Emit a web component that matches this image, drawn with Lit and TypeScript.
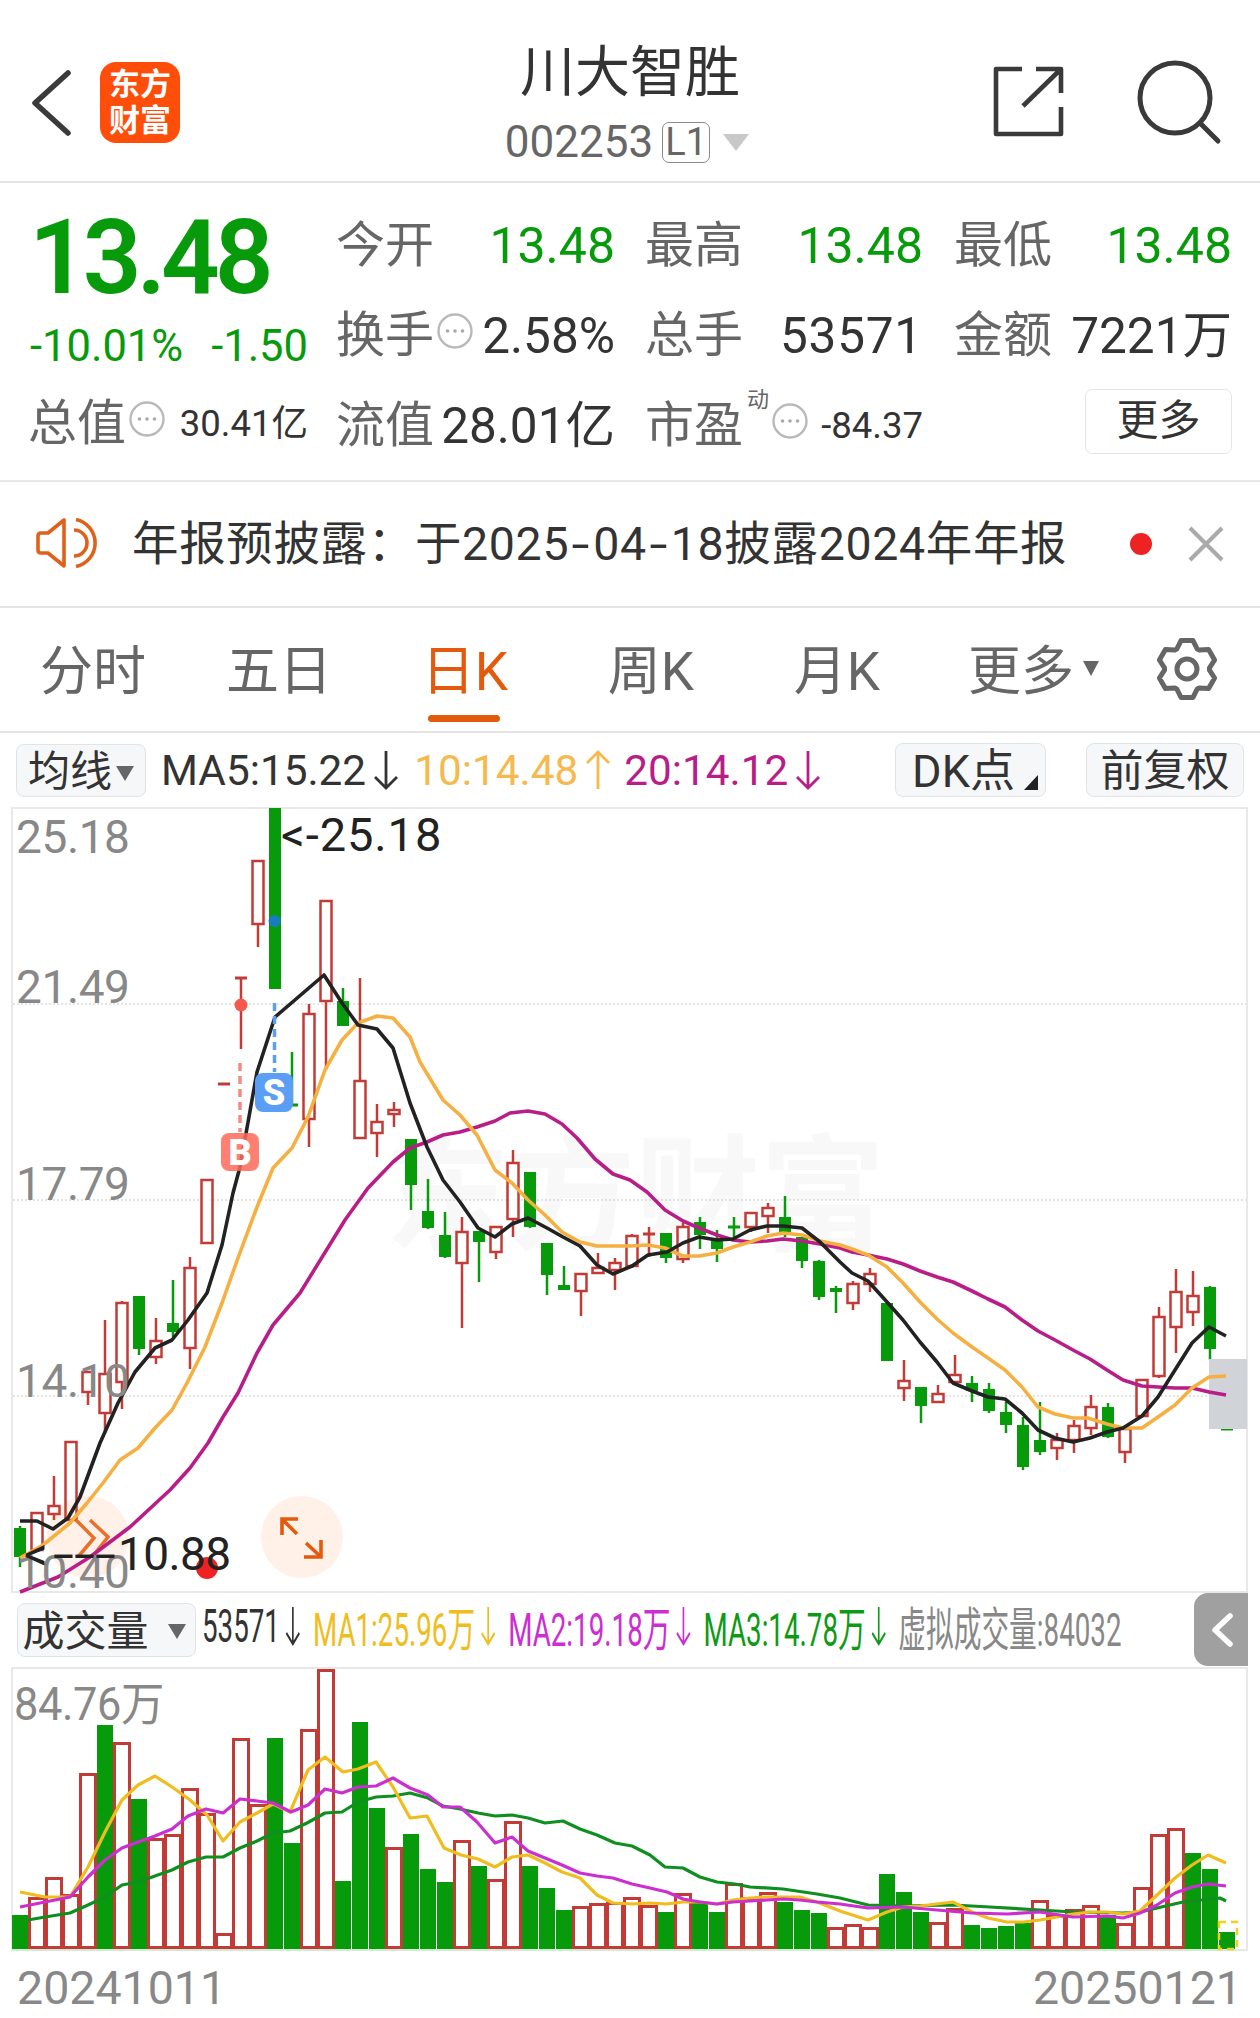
import { LitElement, html, css, svg, unsafeCSS } from "lit";
import { customElement } from "lit/decorators.js";

const RED = "#c23b36";
const GREEN = "#079a0b";
const svgColor = (c: string) => unsafeCSS(c);

// [wickTop, bodyTop, bodyBottom, wickBottom, isGreen]
const K: [number, number, number, number, number][] = [
  [1526,1528,1557,1567,1],[1513,1513,1550,1550,0],[1476,1506,1514,1520,0],[1442,1442,1520,1520,0],
  [1372,1372,1392,1405,0],[1320,1374,1413,1433,0],[1301,1303,1382,1409,0],[1296,1296,1349,1355,1],
  [1318,1341,1357,1364,0],[1280,1323,1332,1337,1],[1257,1268,1348,1369,0],[1180,1180,1243,1243,0],
  [1084,1084,1084,1084,0],[978,978,978,1049,0],[861,861,924,947,0],[808,808,989,989,1],
  [1052,1105,1105,1105,1],[1004,1014,1119,1147,0],[901,901,1001,1070,0],[988,1001,1026,1026,1],
  [978,1081,1138,1138,0],[1104,1122,1133,1157,0],[1102,1110,1114,1127,0],[1139,1139,1185,1210,1],
  [1179,1211,1228,1229,1],[1212,1235,1257,1258,1],[1217,1232,1263,1328,0],[1231,1231,1242,1282,1],
  [1227,1227,1252,1259,0],[1150,1163,1219,1237,0],[1172,1172,1227,1228,1],[1243,1243,1275,1295,1],
  [1266,1285,1290,1290,1],[1274,1274,1291,1316,0],[1253,1268,1273,1273,0],[1258,1263,1270,1290,0],
  [1234,1236,1266,1268,0],[1227,1233,1235,1257,0],[1233,1233,1258,1263,1],[1223,1227,1259,1263,0],
  [1217,1222,1235,1249,1],[1230,1238,1249,1262,1],[1217,1227,1227,1240,1],[1213,1213,1227,1232,0],
  [1203,1208,1216,1233,0],[1196,1217,1232,1237,1],[1237,1237,1261,1268,1],[1260,1261,1297,1300,1],
  [1286,1288,1292,1313,1],[1281,1284,1303,1310,0],[1268,1274,1284,1292,0],[1303,1303,1361,1361,1],
  [1360,1381,1388,1401,0],[1387,1387,1406,1423,1],[1385,1394,1402,1403,0],[1355,1375,1382,1383,0],
  [1376,1383,1391,1402,1],[1383,1389,1411,1413,1],[1402,1412,1425,1433,1],[1417,1425,1467,1470,1],
  [1402,1440,1452,1455,1],[1433,1440,1448,1460,0],[1420,1426,1440,1453,0],[1395,1407,1428,1435,0],
  [1403,1407,1437,1438,1],[1429,1429,1452,1463,0],[1380,1380,1416,1416,0],[1307,1317,1376,1378,0],
  [1269,1292,1327,1353,0],[1271,1296,1312,1326,0],[1286,1287,1349,1360,1],[1429,1429,1429,1429,1],
];

// [top, isGreen]
const V: [number, number][] = [
  [1915,1],[1897,0],[1877,0],[1894,0],[1773,0],[1725,1],[1742,0],[1799,1],[1838,0],[1834,0],[1788,0],[1813,0],
  [1933,0],[1738,0],[1804,0],[1738,1],[1843,1],[1729,0],[1669,0],[1881,1],[1722,1],[1808,1],[1847,0],[1834,1],
  [1869,1],[1882,1],[1840,0],[1866,1],[1879,0],[1821,0],[1866,1],[1888,1],[1910,1],[1906,0],[1903,0],[1902,0],
  [1897,0],[1905,0],[1912,1],[1893,0],[1903,1],[1912,1],[1883,0],[1897,0],[1892,0],[1902,1],[1910,1],[1913,1],
  [1927,0],[1924,0],[1927,0],[1874,1],[1892,1],[1912,1],[1922,0],[1908,0],[1925,1],[1928,1],[1926,1],[1923,1],
  [1900,0],[1915,0],[1909,0],[1905,0],[1915,1],[1923,0],[1887,0],[1834,0],[1828,0],[1853,1],[1869,1],[1932,1],
];

const MA5 = "20,1521 37,1521 53,1529 68,1518 80,1497 100,1443 118,1403 135,1372 155,1348 172,1340 188,1320 207,1293 222,1245 233,1193 240,1167 257,1072 275,1017 324,975 342,1003 358,1025 377,1029 393,1048 410,1103 427,1147 443,1180 460,1202 478,1228 495,1237 512,1224 528,1218 547,1228 563,1237 580,1246 597,1265 613,1274 632,1266 648,1255 667,1252 683,1243 699,1237 717,1240 733,1239 750,1230 767,1226 783,1226 802,1228 820,1242 840,1262 852,1273 868,1281 887,1302 903,1320 920,1342 937,1362 953,1383 972,1391 988,1397 1005,1399 1022,1413 1038,1430 1055,1438 1073,1442 1090,1438 1107,1432 1123,1428 1142,1416 1158,1397 1175,1370 1192,1343 1209,1327 1226,1336";
const MA10 = "20,1558 43,1545 70,1523 87,1503 103,1483 120,1460 138,1448 155,1428 172,1410 187,1383 205,1347 222,1303 238,1258 257,1207 273,1168 292,1148 308,1117 325,1070 342,1040 358,1023 377,1016 393,1018 410,1037 420,1062 443,1100 460,1115 477,1135 495,1170 512,1183 528,1200 545,1215 562,1232 580,1242 597,1246 613,1246 630,1246 648,1245 665,1248 683,1256 699,1256 717,1253 733,1247 750,1242 767,1236 783,1233 802,1235 820,1241 840,1245 852,1249 868,1255 887,1267 903,1283 920,1302 937,1319 953,1333 972,1347 988,1358 1005,1370 1022,1387 1038,1407 1055,1414 1073,1418 1088,1418 1107,1424 1123,1428 1142,1428 1158,1417 1175,1405 1192,1388 1209,1377 1226,1376";
const MA20 = "20,1592 58,1577 90,1557 130,1527 170,1490 190,1468 208,1443 223,1417 238,1393 257,1353 273,1325 300,1293 345,1220 368,1188 393,1162 410,1148 427,1142 443,1135 460,1132 477,1127 495,1121 510,1113 528,1111 545,1114 562,1124 577,1138 595,1159 613,1174 630,1180 647,1192 665,1210 683,1221 699,1228 717,1235 733,1240 750,1242 767,1241 783,1239 802,1241 820,1244 840,1248 852,1252 868,1255 887,1259 903,1264 920,1271 937,1277 953,1282 972,1291 988,1299 1005,1307 1022,1320 1038,1331 1055,1340 1073,1350 1090,1359 1107,1370 1123,1380 1142,1386 1158,1387 1175,1388 1192,1388 1209,1392 1226,1395";

const VMA1 = "20,1892 45,1897 70,1897 88,1867 105,1832 122,1800 138,1785 155,1776 172,1787 190,1800 207,1815 223,1841 240,1822 257,1813 273,1804 290,1812 308,1770 325,1757 343,1772 358,1769 376,1762 393,1787 410,1818 427,1816 444,1848 461,1855 478,1859 495,1867 512,1857 528,1855 545,1863 562,1872 580,1878 597,1895 613,1903 633,1904 650,1903 667,1904 683,1902 700,1902 717,1904 733,1900 750,1898 767,1897 783,1897 800,1897 817,1902 840,1911 868,1920 887,1912 903,1907 920,1906 953,1902 972,1912 988,1918 1007,1922 1023,1922 1040,1920 1057,1917 1073,1914 1090,1912 1107,1912 1123,1914 1140,1911 1157,1895 1175,1878 1192,1865 1208,1855 1226,1863";
const VMA2 = "20,1907 45,1902 70,1897 88,1877 105,1860 122,1848 138,1842 155,1836 172,1829 188,1816 206,1809 223,1813 240,1799 257,1801 273,1803 291,1812 308,1805 325,1789 342,1793 358,1787 376,1786 393,1778 410,1788 428,1795 443,1807 460,1807 477,1822 495,1843 512,1837 528,1851 545,1858 562,1865 580,1873 597,1876 613,1878 632,1884 650,1888 667,1892 683,1899 700,1902 717,1904 733,1902 750,1901 767,1900 783,1899 800,1900 817,1902 840,1904 868,1908 903,1907 937,1910 972,1913 1007,1914 1040,1912 1073,1917 1107,1916 1123,1918 1140,1913 1157,1905 1175,1893 1192,1887 1208,1884 1226,1886";
const VMA3 = "28,1920 45,1917 70,1913 88,1905 105,1897 122,1885 138,1882 155,1876 172,1870 188,1862 206,1857 223,1857 240,1848 257,1841 273,1833 290,1831 307,1823 325,1813 342,1812 358,1802 376,1797 393,1796 410,1793 428,1798 443,1806 460,1809 478,1813 495,1816 512,1815 528,1818 545,1823 563,1821 580,1829 597,1835 615,1843 632,1846 650,1855 665,1867 683,1868 700,1877 717,1882 735,1884 750,1887 783,1889 817,1894 840,1898 868,1905 903,1906 953,1905 990,1907 1040,1910 1073,1912 1123,1913 1140,1912 1157,1908 1183,1902 1220,1898 1226,1901";

const cx = (i: number) => 20 + 17 * i;

function gearPath(c: number, cy: number): string {
  const pts: string[] = [];
  for (let k = 0; k < 6; k++) {
    const a = -90 + 60 * k;
    for (const [d, r] of [[-27, 22.5], [-12, 29], [12, 29], [27, 22.5]]) {
      const t = ((a + d) * Math.PI) / 180;
      pts.push(`${(c + r * Math.cos(t)).toFixed(1)},${(cy + r * Math.sin(t)).toFixed(1)}`);
    }
  }
  return "M" + pts.join("L") + "Z";
}

const dotsIcon = html`<svg class="dots" viewBox="0 0 36 36" width="36" height="36">
  <circle cx="18" cy="18" r="16.5" fill="none" stroke="#b9b9b9" stroke-width="2.4"></circle>
  <circle cx="10.5" cy="18" r="1.8" fill="#a8a8a8"></circle>
  <circle cx="18" cy="18" r="1.8" fill="#a8a8a8"></circle>
  <circle cx="25.5" cy="18" r="1.8" fill="#a8a8a8"></circle>
</svg>`;

const down = html`<svg class="arr" viewBox="0 0 26 40" width="26" height="40">
  <path d="M13 1V38M2 27L13 38L24 27" fill="none" stroke="currentColor" stroke-width="2.8"></path>
</svg>`;
const up = html`<svg class="arr" viewBox="0 0 26 40" width="26" height="40">
  <path d="M13 39V2M2 13L13 2L24 13" fill="none" stroke="currentColor" stroke-width="2.8"></path>
</svg>`;

@customElement("app-root")
export class AppRoot extends LitElement {
  static styles = css`
    :host {
      display: block;
      width: 1260px;
      height: 2018px;
      overflow: hidden;
      position: relative;
      background: #fff;
      font-family: Roboto, "Noto Sans CJK SC", sans-serif;
      color: #333;
    }
    svg { display: block; }
    .hdr {
      height: 181px;
      border-bottom: 2px solid #e4e4e4;
      display: grid;
      grid-template-columns: 1fr auto 1fr;
    }
    .hl { display: flex; align-items: flex-start; padding: 62px 0 0 28px; gap: 26px; }
    .logo {
      width: 80px; height: 81px; border-radius: 16px; background: #ff4d0a; color: #fff;
      font-weight: 700; font-size: 31px; line-height: 36px; text-align: center;
      display: flex; flex-direction: column; justify-content: center;
    }
    .hc { display: flex; flex-direction: column; align-items: center; padding-top: 37px; }
    .title { font-size: 55px; line-height: 70px; color: #333; }
    .code { display: flex; align-items: center; margin-top: 11px; height: 48px; color: #666; font-size: 44px; margin-right: 6px; }
    .l1 {
      width: 48px; height: 41px; border: 1.5px solid #8a8a8a; border-radius: 7px; box-sizing: border-box;
      font-size: 38px; line-height: 39px; text-align: center; margin-left: 9px; color: #666;
    }
    .tri { width: 0; height: 0; border-left: 13.5px solid transparent; border-right: 13.5px solid transparent; border-top: 17px solid #c8c8c8; margin-left: 13px; }
    .hr { display: flex; justify-content: flex-end; align-items: flex-start; padding: 58px 35px 0 0; gap: 65px; }

    .quote { padding-top: 18px; height: 279px; border-bottom: 2px solid #e8e8e8; display: flex; }
    .ql { width: 280px; margin-left: 28px; display: flex; flex-direction: column; }
    .big { height: 110px; margin-top: 2px; font-size: 103px; line-height: 110px; font-weight: 600; color: ${svgColor(GREEN)}; letter-spacing: -5px; margin-left: 1px; }
    .chg { height: 66px; margin-left: 2px; display: flex; justify-content: space-between; align-items: center; font-size: 43.5px; color: ${svgColor(GREEN)}; }
    .qcell { height: 90px; display: flex; align-items: center; }
    .lab { font-size: 49px; line-height: 60px; color: #666; }
    .val { font-size: 49.5px; line-height: 60px; margin-left: auto; color: #333; }
    .val.g { color: ${svgColor(GREEN)}; font-size: 50px; }
    .val.sm { font-size: 36.5px; }
    .val.w { letter-spacing: 0.8px; }
    .dots { margin: -10px 0 0 3px; flex: none; }
    .grid { display: grid; grid-template-columns: 309px 309px 278px; grid-auto-rows: 90px; align-content: start; margin-left: 28px; }
    .c1 { padding-right: 30px; }
    .c2 { padding-right: 31px; }
    .sup { font-size: 22px; line-height: 24px; align-self: flex-start; margin: 7px 0 0 4px; color: #666; }
    .more {
      width: 147px; height: 65px; margin: -9px 0 0 auto; box-sizing: border-box; border: 1.5px solid #e6e6e6; border-radius: 7px;
      font-size: 42px; line-height: 62px; text-align: center; color: #333;
    }

    .notice { height: 124px; border-bottom: 2px solid #e4e4e4; display: flex; align-items: center; padding-left: 34px; }
    .ntext { font-size: 46.5px; line-height: 60px; margin-left: 32px; letter-spacing: 0.65px; color: #333; white-space: nowrap; }
    .h { display: inline-block; width: 24px; text-align: center; transform: scaleX(1.4); }
    .ndot { width: 22px; height: 22px; border-radius: 50%; background: #ee2222; margin-left: 63px; flex: none; }
    .nx { margin-left: 36px; flex: none; }

    .tabs { height: 118px; padding-top: 5px; border-bottom: 2px solid #e4e4e4; display: flex; align-items: center; }
    .tab { width: 186px; text-align: center; font-size: 53px; line-height: 60px; color: #666; position: relative; flex: none; margin-left: 0; }
    .tab.on { color: #e35a0c; }
    .tab.on::after { content: ""; position: absolute; left: 56px; bottom: -20px; width: 72px; height: 7px; border-radius: 4px; background: #e35a0c; }
    .tmore { display: flex; align-items: center; padding-left: 38px; box-sizing: border-box; }
    .ttri { width: 0; height: 0; border-left: 8.5px solid transparent; border-right: 8.5px solid transparent; border-top: 15px solid #666; margin-left: 9px; margin-top: -8px; }
    .gear { margin: -6px 0 0 36px; }

    .marow { height: 74px; display: flex; align-items: center; padding-left: 16px; font-size: 42.3px; }
    .btn { background: #f6f7f9; border: 1.5px solid #e2e3e7; border-radius: 8px; box-sizing: border-box; display: flex; align-items: center; justify-content: center; color: #333; position: relative; flex: none; padding-bottom: 6px; }
    .b1 { width: 130px; height: 53px; padding-right: 22px; font-size: 42px; }
    .b1tri { position: absolute; right: 11px; top: 21px; width: 0; height: 0; border-left: 9px solid transparent; border-right: 9px solid transparent; border-top: 15px solid #666; }
    .m5 { margin-left: 15px; color: #333; }
    .m10 { color: #f6b94d; margin-left: 15px; }
    .m20 { color: #b81e88; margin-left: 13px; }
    .arr { margin-left: 7px; flex: none; }
    .right { margin-left: auto; display: flex; gap: 40px; padding-right: 16px; }
    .b2 { width: 151px; height: 54px; padding-right: 14px; font-size: 45px; }
    .corner { position: absolute; right: 7px; bottom: 6px; width: 0; height: 0; border-bottom: 15px solid #222; border-left: 14px solid transparent; }
    .b3 { width: 158px; height: 54px; font-size: 43px; }
    .cl { color: #333; }
    .c10 { color: #f6b94d; }
    .c20 { color: #b81e88; }

    .vrow { height: 74px; display: flex; align-items: center; padding-left: 17px; position: relative; }
    .v1 { width: 179px; height: 54px; font-size: 42px; padding-right: 42px; }
    .v1tri { position: absolute; right: 9px; top: 20px; width: 0; height: 0; border-left: 9px solid transparent; border-right: 9px solid transparent; border-top: 15px solid #666; }
    .vtxt { display: flex; align-items: center; font-size: 47px; margin: -9px 0 0 6px; transform: scaleX(0.59); transform-origin: left center; white-space: nowrap; width: 1800px; flex: none; }
    .vtxt .arr { margin-left: 9px; }
    .gold { color: #f0bd1f; margin-left: 21px; }
    .mag { color: #cc2fd0; margin-left: 21px; }
    .grn { color: #0f9a15; margin-left: 21px; }
    .gry { color: #888; margin-left: 20px; }
    .back { position: absolute; right: 12px; top: 0; width: 54px; height: 73px; background: #a0a0a0; border-radius: 14px 0 0 14px; }
    .cgold { color: #f0bd1f; }
    .cmag { color: #cc2fd0; }
    .cgrn { color: #0f9a15; }

    .dates { display: flex; justify-content: space-between; padding: 0 18px 0 17px; font-size: 46.5px; line-height: 60px; color: #888; margin-top: 6px; }

    .chart { overflow: visible; }
    .wm { font-weight: 700; font-size: 125px; fill: #f8f8f8; }
    .yl { font-size: 46px; fill: #888; letter-spacing: -0.4px; }
    .mk { font-size: 47px; fill: #222; }
    .mk2 { font-size: 46px; fill: #222; letter-spacing: -0.6px; }
    .bd { font-size: 36px; font-weight: 900; fill: #fff; text-anchor: middle; }
  `;

  private poly(pts: string, color: string, w = 3.6) {
    return svg`<polyline points=${pts} fill="none" stroke=${color} stroke-width=${w} stroke-linejoin="round"></polyline>`;
  }

  private candle(k: [number, number, number, number, number], i: number) {
    const [wt, bt, bb, wb, g] = k;
    const x = cx(i);
    const c = g ? GREEN : RED;
    const wick = svg`<line x1=${x} x2=${x} y1=${wt} y2=${wb} stroke=${c} stroke-width="2.5"></line>`;
    if (bb - bt < 3) {
      return svg`${wick}<line x1=${x - 6} x2=${x + 6} y1=${(bt + bb) / 2} y2=${(bt + bb) / 2} stroke=${c} stroke-width="3"></line>`;
    }
    if (g) return svg`${wick}<rect x=${x - 6} y=${bt} width="12" height=${bb - bt} fill=${c}></rect>`;
    return svg`${wick}<rect x=${x - 5.5} y=${bt} width="11" height=${bb - bt} fill="#fff" stroke=${c} stroke-width="2.5"></rect>`;
  }

  private bar(v: [number, number], i: number) {
    const x = cx(i);
    if (v[1]) return svg`<rect x=${x - 8} y=${v[0]} width="16" height=${1949 - v[0]} fill=${GREEN}></rect>`;
    return svg`<rect x=${x - 7.5} y=${v[0] + 1.5} width="15" height=${1949 - v[0] - 3} fill="#fff" stroke=${RED} stroke-width="3"></rect>`;
  }

  private mainChart() {
    return html`<svg class="chart" width="1260" height="786" viewBox="0 807 1260 786">
      <text class="wm" x="385" y="1240">东方财富</text>
      <rect x="12" y="808" width="1235" height="784" fill="none" stroke="#e3e3e3" stroke-width="1.6"></rect>
      ${[1004, 1200, 1396].map((y) => svg`<line x1="13" x2="1246" y1=${y} y2=${y} stroke="#c9c9c9" stroke-width="1" stroke-dasharray="2 2"></line>`)}
      ${K.map((k, i) => this.candle(k, i))}
      <rect x="1209" y="1359" width="38" height="70" fill="#d0d3d8"></rect>
      <circle cx="88" cy="1537" r="41" fill="#ff6a1a" opacity="0.1"></circle>
      <path d="M76 1520L94 1538L78 1557M90 1520L108 1537L92 1557" fill="none" stroke="#e8702a" stroke-width="3.5"></path>
      ${this.poly(MA20, "#b91d87")}
      ${this.poly(MA10, "#f5b041")}
      ${this.poly(MA5, "#222")}

      <line x1="240" x2="240" y1="1063" y2="1132" stroke="#f58a80" stroke-width="3.5" stroke-dasharray="8 5"></line>
      <line x1="274.5" x2="274.5" y1="1003" y2="1072" stroke="#5a9ef5" stroke-width="3.5" stroke-dasharray="8 5"></line>
      <circle cx="241" cy="1005" r="6.5" fill="#f8574c"></circle>
      <circle cx="274.5" cy="921" r="6" fill="#1a7cc0"></circle>
      <rect x="221" y="1133" width="38" height="38" rx="8" fill="#ff6a5a" opacity="0.85"></rect>
      <text class="bd" x="240" y="1165">B</text>
      <rect x="255" y="1073" width="38" height="39" rx="8" fill="#5a9ef5"></rect>
      <text class="bd" x="274" y="1105">S</text>

      <circle cx="302" cy="1537" r="41" fill="#ff6a1a" opacity="0.1"></circle>
      <path d="M282 1535V1519H298M282 1519L297 1534M321 1540V1557H304M321 1557L306 1543" fill="none" stroke="#e35a0c" stroke-width="3.6"></path>

      <circle cx="207" cy="1568" r="11" fill="#ee2222"></circle>
      <text class="yl" x="16" y="853">25.18</text>
      <text class="yl" x="16" y="1003">21.49</text>
      <text class="yl" x="16" y="1200">17.79</text>
      <text class="yl" x="16" y="1397">14.10</text>
      <text class="yl" x="16" y="1588">10.40</text>
      <text class="mk" x="281" y="851" letter-spacing="0.9">&lt;-25.18</text>
      <text class="mk" x="24" y="1570">&lt;</text>
      <text class="mk" x="53" y="1570" textLength="63" lengthAdjust="spacingAndGlyphs">---</text>
      <text class="mk2" x="118" y="1570">10.88</text>
    </svg>`;
  }

  private volChart() {
    return html`<svg width="1260" height="285" viewBox="0 1667 1260 285">
      <rect x="12" y="1668" width="1235" height="282" fill="none" stroke="#e3e3e3" stroke-width="1.6"></rect>
      ${V.map((v, i) => this.bar(v, i))}
      <line x1="12" x2="1237" y1="1950" y2="1950" stroke="#cfeccf" stroke-width="1.5"></line>
      <rect x="1219" y="1922" width="18" height="27" fill="none" stroke="#f0d020" stroke-width="2.5" stroke-dasharray="7 5"></rect>
      ${this.poly(VMA3, "#0f8f1f", 3.2)}
      ${this.poly(VMA1, "#f0bd1f", 3.2)}
      ${this.poly(VMA2, "#cc2fd0", 3.2)}
      <text class="yl" x="14" y="1720" textLength="150" lengthAdjust="spacingAndGlyphs">84.76万</text>
    </svg>`;
  }

  render() {
    return html`
      <div class="hdr">
        <div class="hl">
          <svg viewBox="28 62 46 81" width="46" height="81"><path d="M68 73L35 103L68 133" fill="none" stroke="#3a3a3a" stroke-width="5.5" stroke-linecap="round" stroke-linejoin="round"></path></svg>
          <div class="logo"><span>东方</span><span>财富</span></div>
        </div>
        <div class="hc">
          <div class="title">川大智胜</div>
          <div class="code"><span>002253</span><span class="l1">L1</span><span class="tri"></span></div>
        </div>
        <div class="hr">
          <svg viewBox="990 58 80 90" width="80" height="90"><path d="M1022 69H996V134H1061V107M1023 106L1061 69M1036 69H1061V93" fill="none" stroke="#3a3a3a" stroke-width="4.6" stroke-linejoin="round"></path></svg>
          <svg viewBox="1135 58 90 90" width="90" height="90"><circle cx="1175" cy="98" r="35" fill="none" stroke="#3a3a3a" stroke-width="5"></circle><path d="M1200 123L1218 141" stroke="#3a3a3a" stroke-width="5" stroke-linecap="round"></path></svg>
        </div>
      </div>

      <div class="quote">
        <div class="ql">
          <div class="big">13.48</div>
          <div class="chg"><span>-10.01%</span><span>-1.50</span></div>
          <div class="qcell"><span class="lab">总值</span>${dotsIcon}<span class="val sm">30.41亿</span></div>
        </div>
        <div class="grid">
          <div class="qcell c1"><span class="lab">今开</span><span class="val g">13.48</span></div>
          <div class="qcell c2"><span class="lab">最高</span><span class="val g">13.48</span></div>
          <div class="qcell"><span class="lab">最低</span><span class="val g">13.48</span></div>
          <div class="qcell c1"><span class="lab">换手</span>${dotsIcon}<span class="val">2.58%</span></div>
          <div class="qcell c2"><span class="lab">总手</span><span class="val w">53571</span></div>
          <div class="qcell"><span class="lab">金额</span><span class="val">7221万</span></div>
          <div class="qcell c1"><span class="lab">流值</span><span class="val">28.01亿</span></div>
          <div class="qcell c2"><span class="lab">市盈</span><span class="sup">动</span>${dotsIcon}<span class="val sm">-84.37</span></div>
          <div class="qcell"><span class="more">更多</span></div>
        </div>
      </div>

      <div class="notice">
        <svg viewBox="34 514 66 60" width="66" height="60"><path d="M64 520V566L48 553H41Q38 553 38 550V536Q38 533 41 533H48Z" fill="none" stroke="#e0611b" stroke-width="3.6" stroke-linejoin="round"></path><path d="M74 530A13 13 0 0 1 74 556M76 519.5A24 24 0 0 1 76 566.5" fill="none" stroke="#e0611b" stroke-width="3.6"></path></svg>
        <span class="ntext">年报预披露：于2025<span class="h">-</span>04<span class="h">-</span>18披露2024年年报</span>
        <span class="ndot"></span>
        <svg class="nx" viewBox="0 0 36 36" width="36" height="36"><path d="M2 2L34 34M34 2L2 34" stroke="#aaa" stroke-width="4.2"></path></svg>
      </div>

      <div class="tabs">
        <div class="tab">分时</div>
        <div class="tab">五日</div>
        <div class="tab on">日K</div>
        <div class="tab">周K</div>
        <div class="tab">月K</div>
        <div class="tab tmore"><span>更多</span><span class="ttri"></span></div>
        <svg class="gear" viewBox="1152 635 70 70" width="70" height="70"><path d=${gearPath(1187, 670)} fill="none" stroke="#666" stroke-width="5" stroke-linejoin="round"></path><circle cx="1187" cy="670" r="10" fill="none" stroke="#666" stroke-width="5"></circle></svg>
      </div>

      <div class="marow">
        <div class="btn b1">均线<span class="b1tri"></span></div>
        <span class="m5">MA5:15.22</span><span class="cl">${down}</span>
        <span class="m10">10:14.48</span><span class="c10">${up}</span>
        <span class="m20">20:14.12</span><span class="c20">${down}</span>
        <div class="right">
          <div class="btn b2">DK点<span class="corner"></span></div>
          <div class="btn b3">前复权</div>
        </div>
      </div>

      ${this.mainChart()}

      <div class="vrow">
        <div class="btn v1">成交量<span class="v1tri"></span></div>
        <div class="vtxt">
          <span class="cl">53571</span><span class="cl">${down}</span>
          <span class="gold">MA1:25.96万</span><span class="cgold">${down}</span>
          <span class="mag">MA2:19.18万</span><span class="cmag">${down}</span>
          <span class="grn">MA3:14.78万</span><span class="cgrn">${down}</span>
          <span class="gry">虚拟成交量:84032</span>
        </div>
        <div class="back"><svg viewBox="0 0 54 73" width="54" height="73"><path d="M36 23L21 37L36 51" fill="none" stroke="#fff" stroke-width="5.5" stroke-linecap="round" stroke-linejoin="round"></path></svg></div>
      </div>

      ${this.volChart()}

      <div class="dates"><span>20241011</span><span>20250121</span></div>
    `;
  }
}
